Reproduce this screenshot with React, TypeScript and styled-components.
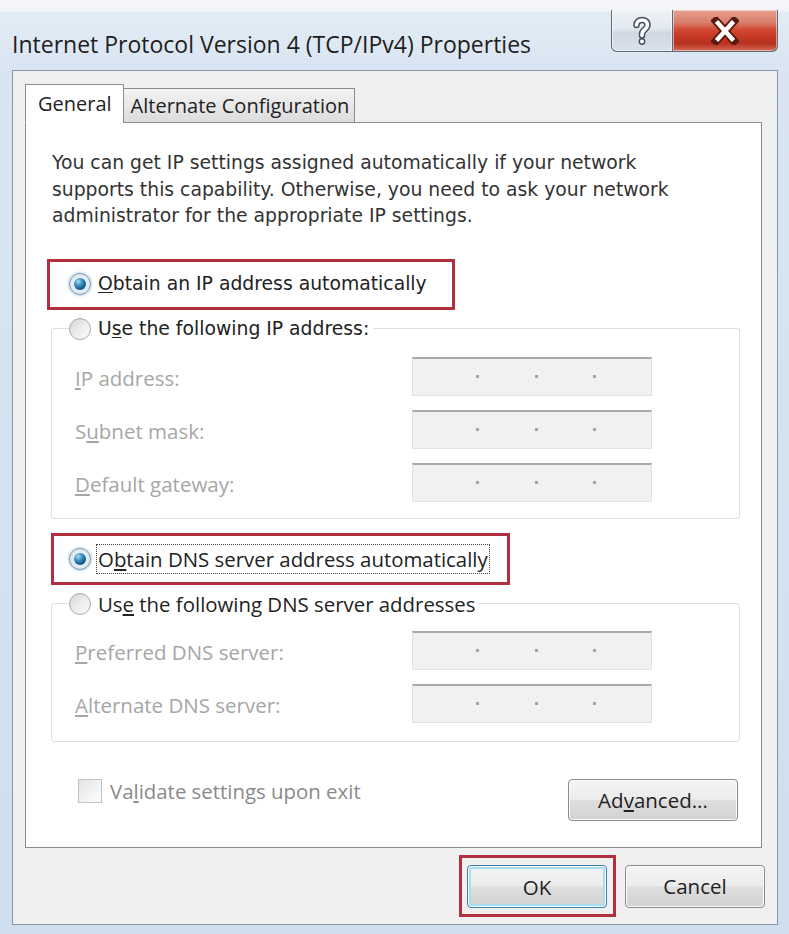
import React from 'react';
import styled, { createGlobalStyle } from 'styled-components';

const shellFont = `"DejaVu Sans", Verdana, sans-serif`;
const uiFont = `"Open Sans", "Noto Sans", sans-serif`;

const GlobalStyle = createGlobalStyle`
  html, body {
    margin: 0;
    padding: 0;
  }
  body {
    width: 789px;
    height: 934px;
    overflow: hidden;
    background: #f3f5f8;
  }
`;

const Window = styled.div`
  box-sizing: border-box;
  width: 789px;
  height: 934px;
  padding: 10px 11px 9px 12px;
  display: flex;
  flex-direction: column;
  background: linear-gradient(
    to bottom,
    #f3f5f8 0,
    #f3f5f8 11px,
    #e3ecf5 12px,
    #d9e5f2 70px,
    #cfdfef 100%
  );
`;

const TitleBar = styled.header`
  flex: none;
  height: 60px;
  display: flex;
  justify-content: space-between;
  align-items: flex-start;
`;

const Caption = styled.h1`
  margin: 0;
  padding-top: 20px;
  font: 400 23px/28px ${uiFont};
  color: #1e1e1e;
`;

const CaptionButtons = styled.div`
  display: flex;
`;

const CaptionButton = styled.button<{ $kind: 'help' | 'close' }>`
  box-sizing: border-box;
  width: ${({ $kind }) => ($kind === 'help' ? 62 : 105)}px;
  height: 42px;
  padding: 0;
  display: flex;
  align-items: center;
  justify-content: center;
  border: 1px solid #5d6b7a;
  border-top: none;
  border-left-width: ${({ $kind }) => ($kind === 'help' ? 1 : 0)}px;
  border-radius: ${({ $kind }) => ($kind === 'help' ? '0 0 0 6px' : '0 0 6px 0')};
  background: ${({ $kind }) =>
    $kind === 'help'
      ? 'linear-gradient(to bottom, #eef2f6 0%, #e2e9f0 45%, #cfd8e2 55%, #d9e1ea 100%)'
      : 'linear-gradient(to bottom, #e7a090 0%, #d9806d 30%, #cf4a33 48%, #c83a24 62%, #b8321f 82%, #d26a55 100%)'};
  box-shadow: inset 0 0 0 1px rgba(255, 255, 255, 0.5);
`;

const Client = styled.main`
  flex: 1;
  display: flex;
  flex-direction: column;
  background: #f0f0f0;
  border: 1px solid #8a96a3;
  padding: 14px 12px 0 12px;
`;

const TabList = styled.div`
  display: flex;
  align-items: flex-end;
  height: 38px;
  margin-bottom: -1px;
  position: relative;
  z-index: 1;
`;

const Tab = styled.div<{ $active?: boolean }>`
  box-sizing: border-box;
  height: ${({ $active }) => ($active ? 39 : 35)}px;
  padding: 0 ${({ $active }) => ($active ? '11px 0 12px' : '5px 0 7px')};
  margin-left: ${({ $active }) => ($active ? 0 : -1)}px;
  display: flex;
  align-items: center;
  border: 1px solid #898c95;
  border-bottom-color: ${({ $active }) => ($active ? '#fff' : '#898c95')};
  background: ${({ $active }) => ($active ? '#fff' : 'linear-gradient(to bottom, #f3f3f3, #dcdcdc)')};
  font: 400 20px/24px ${uiFont};
  color: #222;
`;

const Panel = styled.section`
  box-sizing: border-box;
  height: 726px;
  margin-right: 3px;
  padding: 0 21px;
  display: flex;
  flex-direction: column;
  border: 1px solid #898c95;
  background: #fff;
`;

const Intro = styled.p`
  margin: 27px 0 0 5px;
  font: 400 18.8px/26.5px ${shellFont};
  color: #333;
  white-space: nowrap;
`;

const Highlight = styled.div<{ $offset: number; $width: number; $inset: number }>`
  box-sizing: border-box;
  width: ${({ $width }) => $width}px;
  height: 51px;
  margin-left: ${({ $offset }) => $offset}px;
  padding-left: ${({ $inset }) => $inset}px;
  display: flex;
  align-items: center;
  border: 3px solid #b0303e;
`;

const Choice = styled.label<{ $face?: 'shell' | 'ui' }>`
  display: inline-flex;
  align-items: center;
  gap: 7px;
  white-space: nowrap;
  font: 400 ${({ $face }) => ($face === 'ui' ? '20.4px' : '18.8px')} / 26px
    ${({ $face }) => ($face === 'ui' ? uiFont : shellFont)};
  color: #222;
`;

const Radio = styled.span<{ $checked?: boolean }>`
  box-sizing: border-box;
  position: relative;
  flex: none;
  width: 22px;
  height: 22px;
  border-radius: 50%;
  border: 1px solid ${({ $checked }) => ($checked ? '#7f97ab' : '#a9a9a9')};
  background: ${({ $checked }) =>
    $checked
      ? 'radial-gradient(circle at 50% 50%, #f4f8fb 0, #d6e1ea 100%)'
      : 'linear-gradient(135deg, #d6d6d6 0%, #eeeeee 55%, #fbfbfb 100%)'};
  box-shadow: ${({ $checked }) => ($checked ? '0 0 2px 1px rgba(120, 170, 210, 0.45)' : 'none')};

  &::after {
    content: '';
    display: ${({ $checked }) => ($checked ? 'block' : 'none')};
    position: absolute;
    left: 4px;
    top: 4px;
    width: 12px;
    height: 12px;
    border-radius: 50%;
    background: radial-gradient(circle at 35% 30%, #a9dcf6 0, #3d8fc2 35%, #0e4f7e 75%, #0a3a5e 100%);
  }
`;

const FocusText = styled.span`
  outline: 1px dotted #444;
  outline-offset: 1px;
`;

const Key = styled.span`
  text-decoration: underline;
  text-underline-offset: 2px;
`;

const Group = styled.fieldset<{ $top: number; $padTop: number; $padBottom: number }>`
  min-inline-size: 0;
  margin: ${({ $top }) => $top}px 0 0 4px;
  padding: ${({ $padTop }) => $padTop}px 0 ${({ $padBottom }) => $padBottom}px 0;
  border: 1px solid #d9e0e6;
  border-radius: 3px;
`;

const Legend = styled.legend`
  margin-left: 17px;
  padding: 0 4px 0 0;
  height: 26px;
  display: flex;
  align-items: center;
`;

const Fields = styled.div`
  display: grid;
  grid-template-columns: 337px 240px;
  row-gap: 14px;
  align-items: center;
  padding-left: 23px;
`;

const FieldLabel = styled.span`
  font: 400 20.5px/24px ${uiFont};
  color: #a6a6a6;
  padding-top: 3px;
  white-space: nowrap;
`;

const Octets = styled.div`
  box-sizing: border-box;
  height: 39px;
  display: flex;
  align-items: center;
  justify-content: space-evenly;
  padding-left: 8px;
  background: #f1f1f1;
  border: 1px solid #e2e2e2;
  border-top: 2px solid #a9a9a9;
`;

const Dot = styled.span`
  width: 3px;
  height: 3px;
  background: #a3a3a3;
`;

const OptionsRow = styled.div`
  margin: 37px 2px 0 31px;
  display: flex;
  align-items: flex-start;
  justify-content: space-between;
`;

const Check = styled.label`
  display: flex;
  align-items: center;
  gap: 8px;
  height: 24px;
  white-space: nowrap;
  font: 400 20.4px/24px ${uiFont};
  color: #8a8a8a;
`;

const CheckBox = styled.span`
  box-sizing: border-box;
  width: 24px;
  height: 24px;
  border: 1px solid #c2c2c2;
  background: linear-gradient(135deg, #e4e4e4 0%, #f4f4f4 60%, #fcfcfc 100%);
`;

const Button = styled.button<{ $default?: boolean; $width: number }>`
  box-sizing: border-box;
  width: ${({ $width }) => $width}px;
  height: 43px;
  padding: 0;
  border: 1px solid ${({ $default }) => ($default ? '#3c7fb1' : '#8c8c8c')};
  border-radius: 4px;
  background: linear-gradient(to bottom, #f4f4f4 0%, #ececec 48%, #dedede 52%, #d2d2d2 100%);
  box-shadow: ${({ $default }) =>
    $default ? 'inset 0 0 0 1px #fff, inset 0 0 0 3px #a6def2' : 'inset 0 0 0 1px #fcfcfc'};
  font: 400 20.5px/24px ${uiFont};
  color: #222;
`;

const Footer = styled.footer`
  flex: 1;
  display: flex;
  align-items: center;
  justify-content: flex-end;
  gap: 9px;
`;

const DefaultFrame = styled.div`
  padding: 7px 6px 6px 5px;
  border: 3px solid #b0303e;
`;

const helpPath = 'M3.5 9 C3.5 2.5 14.5 2 14.5 9 C14.5 13.5 9 13.5 9 18 L9 19.5';

const HelpGlyph = () => (
  <svg width="18" height="30" viewBox="0 0 18 30">
    <path d={helpPath} fill="none" stroke="#46505a" strokeWidth="6.5" strokeLinecap="round" />
    <path d={helpPath} fill="none" stroke="#fff" strokeWidth="3.6" strokeLinecap="round" />
    <circle cx="9" cy="25.5" r="3.4" fill="#46505a" />
    <circle cx="9" cy="25.5" r="2" fill="#fff" />
  </svg>
);

const CloseGlyph = () => (
  <svg width="28" height="28" viewBox="0 0 28 28">
    <path d="M5 4 L23 24 M23 4 L5 24" stroke="#5a1a10" strokeWidth="8" strokeLinecap="square" />
    <path d="M5.5 4.5 L22.5 23.5 M22.5 4.5 L5.5 23.5" stroke="#fff" strokeWidth="4.5" strokeLinecap="butt" />
  </svg>
);

const AddressField: React.FC = () => (
  <Octets>
    <Dot />
    <Dot />
    <Dot />
  </Octets>
);

type FieldText = { pre?: string; key: string; rest: string };

const ipFields: FieldText[] = [
  { key: 'I', rest: 'P address:' },
  { pre: 'S', key: 'u', rest: 'bnet mask:' },
  { key: 'D', rest: 'efault gateway:' },
];

const dnsFields: FieldText[] = [
  { key: 'P', rest: 'referred DNS server:' },
  { key: 'A', rest: 'lternate DNS server:' },
];

const FieldRows: React.FC<{ fields: FieldText[] }> = ({ fields }) => (
  <Fields>
    {fields.map((field) => (
      <React.Fragment key={field.rest}>
        <FieldLabel>
          {field.pre}
          <Key>{field.key}</Key>
          {field.rest}
        </FieldLabel>
        <AddressField />
      </React.Fragment>
    ))}
  </Fields>
);

const App: React.FC = () => (
  <>
    <GlobalStyle />
    <Window>
      <TitleBar>
        <Caption>Internet Protocol Version 4 (TCP/IPv4) Properties</Caption>
        <CaptionButtons>
          <CaptionButton $kind="help" aria-label="Help">
            <HelpGlyph />
          </CaptionButton>
          <CaptionButton $kind="close" aria-label="Close">
            <CloseGlyph />
          </CaptionButton>
        </CaptionButtons>
      </TitleBar>

      <Client>
        <TabList>
          <Tab $active>General</Tab>
          <Tab>Alternate Configuration</Tab>
        </TabList>

        <Panel>
          <Intro>
            You can get IP settings assigned automatically if your network
            <br />
            supports this capability. Otherwise, you need to ask your network
            <br />
            administrator for the appropriate IP settings.
          </Intro>

          <Highlight $offset={0} $width={408} $inset={19} style={{ marginTop: 29 }}>
            <Choice>
              <Radio $checked />
              <span>
                <Key>O</Key>btain an IP address automatically
              </span>
            </Choice>
          </Highlight>

          <Group $top={6} $padTop={15} $padBottom={16}>
            <Legend>
              <Choice>
                <Radio />
                <span>
                  U<Key>s</Key>e the following IP address:
                </span>
              </Choice>
            </Legend>
            <FieldRows fields={ipFields} />
          </Group>

          <Highlight $offset={4} $width={459} $inset={15} style={{ marginTop: 14, height: 52 }}>
            <Choice $face="ui">
              <Radio $checked />
              <FocusText>
                O<Key>b</Key>tain DNS server address automatically
              </FocusText>
            </Choice>
          </Highlight>

          <Group $top={6} $padTop={14} $padBottom={18}>
            <Legend>
              <Choice $face="ui">
                <Radio />
                <span>
                  Us<Key>e</Key> the following DNS server addresses
                </span>
              </Choice>
            </Legend>
            <FieldRows fields={dnsFields} />
          </Group>

          <OptionsRow>
            <Check>
              <CheckBox />
              <span>
                Va<Key>l</Key>idate settings upon exit
              </span>
            </Check>
            <Button $width={170} style={{ height: 42 }}>
              Ad<Key>v</Key>anced...
            </Button>
          </OptionsRow>
        </Panel>

        <Footer>
          <DefaultFrame>
            <Button $default $width={140}>
              OK
            </Button>
          </DefaultFrame>
          <Button $width={140}>Cancel</Button>
        </Footer>
      </Client>
    </Window>
  </>
);

export default App;
